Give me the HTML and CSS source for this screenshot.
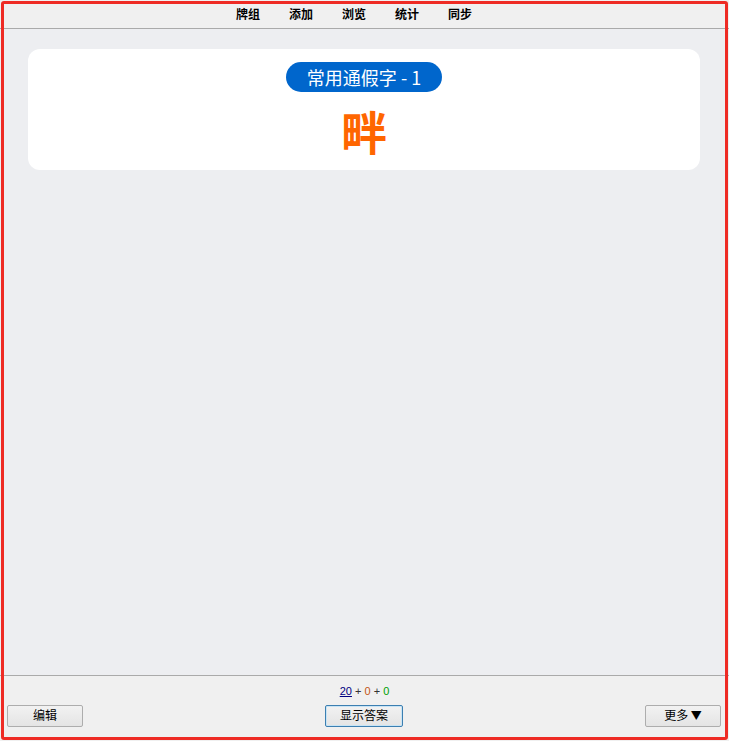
FILE: index.html
```html
<!DOCTYPE html>
<html lang="zh-CN">
<head>
<meta charset="utf-8">
<link rel="stylesheet" href="styles.css">
</head>
<body>
<div class="app">
  <header class="topbar">
    <nav class="nav">
      <span class="nav-item">牌组</span>
      <span class="nav-item">添加</span>
      <span class="nav-item">浏览</span>
      <span class="nav-item">统计</span>
      <span class="nav-item">同步</span>
    </nav>
  </header>
  <main class="review">
    <section class="card">
      <div class="badge">常用通假字 - 1</div>
      <div class="hanzi">畔</div>
    </section>
  </main>
  <footer class="bottombar">
    <div class="counts"><a class="c-new">20</a><span class="plus"> + </span><span class="c-learn">0</span><span class="plus"> + </span><span class="c-review">0</span></div>
    <div class="buttons">
      <button class="btn">编辑</button>
      <button class="btn btn-primary">显示答案</button>
      <button class="btn">更多 <span class="tri">▼</span></button>
    </div>
  </footer>
  <div class="frame"></div>
</div>
</body>
</html>
```
FILE: styles.css
```css
html, body {
  margin: 0;
  padding: 0;
}
body {
  font-family: "Noto Sans CJK SC", "Noto Sans", sans-serif;
  background: #edeef1;
}
.app {
  position: relative;
  height: 741px;
  display: flex;
  flex-direction: column;
  overflow: hidden;
}
.topbar {
  height: 28px;
  background: #f0f0f0;
  border-bottom: 1px solid #aaaaaa;
  display: flex;
  justify-content: center;
  align-items: center;
}
.nav {
  display: flex;
  gap: 27px;
  margin-right: 21px;
}
.nav-item {
  font-size: 12px;
  font-weight: bold;
  color: #000;
  width: 26px;
  text-align: center;
  line-height: 16px;
}
.review {
  flex: 1;
  padding: 20px 29px 0 28px;
}
.card {
  background: #fff;
  border-radius: 12px;
  height: 121px;
  box-sizing: border-box;
  padding-top: 13px;
  display: flex;
  flex-direction: column;
  align-items: center;
}
.badge {
  background: #0066cc;
  color: #fff;
  font-size: 18px;
  height: 30px;
  line-height: 30px;
  padding: 0 21px;
  border-radius: 15px;
}
.hanzi {
  margin-top: 8px;
  color: #ff6600;
  font-size: 46px;
  font-weight: bold;
  line-height: 60px;
}
.bottombar {
  height: 65px;
  background: #f0f0f0;
  border-top: 1px solid #aaaaaa;
  display: flex;
  flex-direction: column;
}
.counts {
  text-align: center;
  font-size: 11px;
  line-height: 14px;
  margin-top: 8px;
  font-family: "Liberation Sans", "Noto Sans CJK SC", sans-serif;
}
.c-new {
  color: #000080;
  text-decoration: underline;
}
.plus { color: #333; }
.c-learn { color: #c35617; }
.c-review { color: #00a000; }
.buttons {
  margin-top: 7px;
  display: flex;
  justify-content: space-between;
  padding: 0 8px 0 7px;
}
.btn {
  width: 76px;
  height: 22px;
  margin: 0;
  padding: 0 0 2px;
  font-family: "Noto Sans CJK SC", sans-serif;
  font-size: 12px;
  line-height: 16px;
  color: #000;
  background: linear-gradient(#f2f2f2, #e4e4e4);
  border: 1px solid #adadad;
  border-radius: 2px;
}
.tri {
  font-size: 11px;
}
.btn-primary {
  width: 78px;
  border-color: #3c7fb1;
  box-shadow: inset 0 0 0 1px #c8e4f5;
}
.frame {
  position: absolute;
  left: 1px;
  top: 1px;
  right: 1px;
  bottom: 1px;
  border: 3px solid #ee2b24;
  border-radius: 3px;
  pointer-events: none;
}
```
